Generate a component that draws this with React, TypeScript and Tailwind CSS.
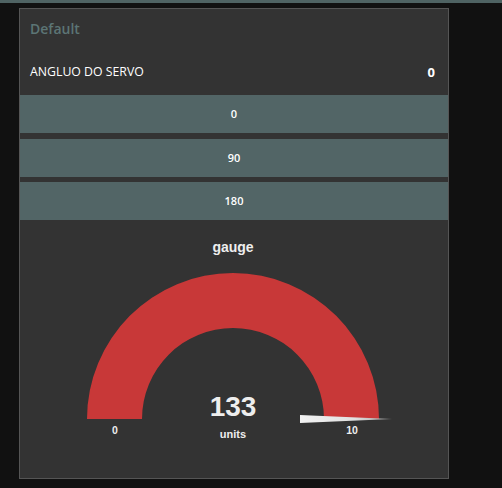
export default function App() {
  const cx = 213;
  const cy = 199;
  const rO = 146;
  const rI = 91;
  const arc = `M ${cx - rO} ${cy} A ${rO} ${rO} 0 0 1 ${cx + rO} ${cy} L ${cx + rI} ${cy} A ${rI} ${rI} 0 0 0 ${cx - rI} ${cy} Z`;

  return (
    <div className="w-[502px] h-[488px] bg-[#111111] overflow-hidden">
      <div className="h-[3px] bg-[#4f6363]" />
      <div className="ml-[19px] mt-[5px] w-[430px] h-[471px] border border-[#555555] bg-[#333333] flex flex-col font-['Open_Sans','Liberation_Sans',sans-serif]">
        <div className="h-[41px] pl-[10px] pt-[10px] text-[14px] font-semibold text-[#5c7575] leading-[20px]">
          Default
        </div>
        <div className="h-[45px] flex items-center justify-between px-[10px] text-[12.3px] text-white">
          <span>ANGLUO DO SERVO</span>
          <span className="font-bold text-[13px] pr-[3px]">0</span>
        </div>
        <div className="flex flex-col">
          {["0", "90", "180"].map((v, i) => (
            <div
              key={v}
              className={`h-[38px] bg-[#526566] flex items-center justify-center text-[11px] font-semibold text-white ${i === 1 ? "mt-[6px]" : i === 2 ? "mt-[5px]" : ""}`}
            >
              {v}
            </div>
          ))}
        </div>
        <svg width="428" height="259" className="font-['Liberation_Sans',Arial,sans-serif]">
          <defs>
            <linearGradient id="needle" x1="0" x2="1" y1="0" y2="0">
              <stop offset="0" stopColor="#f2f2f2" />
              <stop offset="0.6" stopColor="#e0e0e0" />
              <stop offset="1" stopColor="#9a9a9a" />
            </linearGradient>
          </defs>
          <text x={cx} y="32" textAnchor="middle" fill="#eeeeee" fontSize="14" fontWeight="bold">
            gauge
          </text>
          <path d={arc} fill="#c83838" />
          <path d={`M 280 195 L 372 199 L 280 203 Z`} fill="url(#needle)" />
          <text x={cx} y="196" textAnchor="middle" fill="#eeeeee" fontSize="28" fontWeight="bold">
            133
          </text>
          <text x={cx} y="218" textAnchor="middle" fill="#eeeeee" fontSize="11" fontWeight="bold">
            units
          </text>
          <text x="95" y="214" textAnchor="middle" fill="#eeeeee" fontSize="10.5" fontWeight="bold">
            0
          </text>
          <text x="332" y="214" textAnchor="middle" fill="#eeeeee" fontSize="10.5" fontWeight="bold">
            10
          </text>
        </svg>
      </div>
    </div>
  );
}
